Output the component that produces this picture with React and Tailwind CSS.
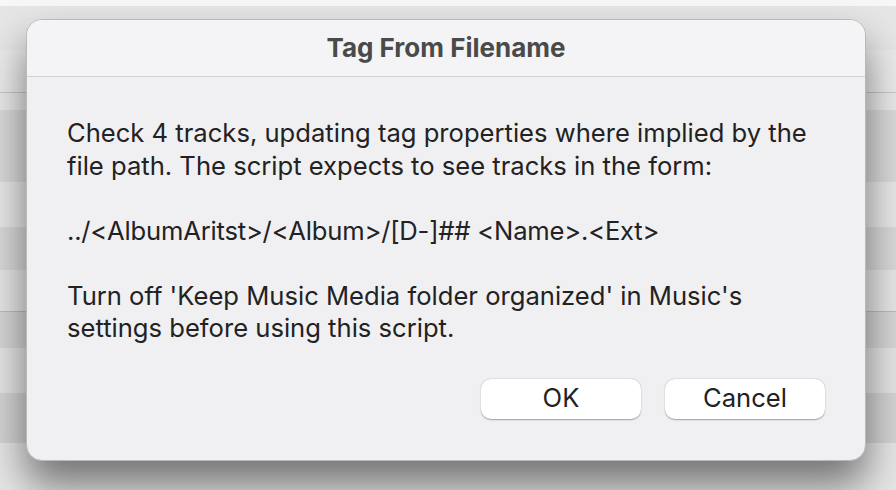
import React from "react";

const bands = [
  { h: 6, c: "bg-[#f7f7f7]" },
  { h: 44, c: "bg-[#e6e6e6]" },
  { h: 43, c: "bg-[#ebebeb] border-b border-[#c8c8c8]" },
  { h: 17, c: "bg-[#e9e9e9]" },
  { h: 72, c: "bg-[#dadada]" },
  { h: 45, c: "bg-[#e8e8e8]" },
  { h: 43, c: "bg-[#d9d9d9]" },
  { h: 42, c: "bg-[#e6e6e6] border-b border-[#bcbcbc]" },
  { h: 36, c: "bg-[#d6d6d6]" },
  { h: 45, c: "bg-[#e4e4e4]" },
  { h: 50, c: "bg-[#d4d4d4]" },
  { h: 47, c: "bg-[#e6e6e6]" },
];

export default function App() {
  return (
    <div
      className="relative w-[896px] h-[490px] overflow-hidden bg-[#e4e4e4]"
      style={{ fontFamily: "Inter, 'Noto Sans', sans-serif" }}
    >
      <div className="flex flex-col">
        {bands.map((b, i) => (
          <div key={i} className={`${b.c} box-border`} style={{ height: b.h }} />
        ))}
      </div>
      <div className="absolute left-[26px] top-[19px] w-[840px] h-[442px] rounded-[16px] border border-[#b9b9b9] bg-[#f0f0f2] shadow-[0_24px_40px_rgba(0,0,0,0.5)] overflow-hidden flex flex-col">
        <div className="h-[57px] shrink-0 bg-[#f4f4f6] border-b border-[#cfcfd2] flex items-center justify-center">
          <span className="text-[26px] font-bold text-[#4a4a4a] tracking-[0px] leading-none">
            Tag From Filename
          </span>
        </div>
        <div className="flex-1 flex flex-col px-[40px] pt-[40px] text-[25.6px] leading-[32.5px] text-[#222222] whitespace-nowrap">
          <p>
            Check 4 tracks, updating tag properties where implied by the
            <br />
            file path. The script expects to see tracks in the form:
          </p>
          <p className="mt-[32.5px] tracking-[-0.2px]">
            ../&lt;AlbumAritst&gt;/&lt;Album&gt;/[D-]## &lt;Name&gt;.&lt;Ext&gt;
          </p>
          <p className="mt-[32.5px]">
            Turn off 'Keep Music Media folder organized' in Music's
            <br />
            settings before using this script.
          </p>
          <div className="mt-[34px] flex justify-end gap-[24px]">
            <button className="w-[160px] h-[40px] rounded-[10px] bg-white shadow-[0_0.5px_1.5px_rgba(0,0,0,0.35)] text-[25.6px] text-[#222222]">
              OK
            </button>
            <button className="w-[160px] h-[40px] rounded-[10px] bg-white shadow-[0_0.5px_1.5px_rgba(0,0,0,0.35)] text-[25.6px] text-[#222222]">
              Cancel
            </button>
          </div>
        </div>
      </div>
    </div>
  );
}
